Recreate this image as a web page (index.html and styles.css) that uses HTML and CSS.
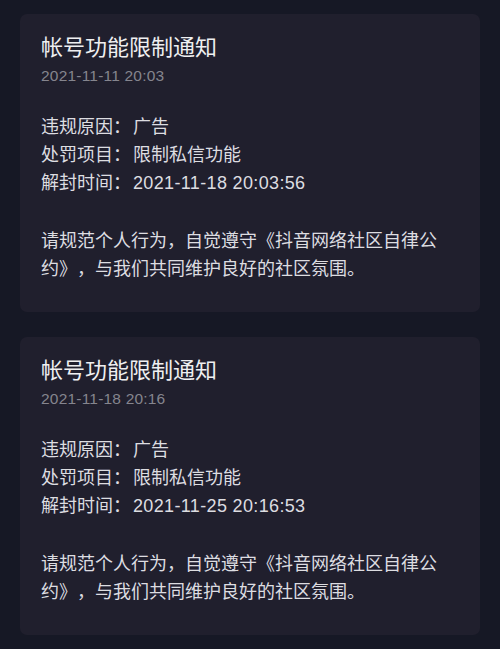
FILE: index.html
```html
<!DOCTYPE html>
<html lang="zh-CN">
<head>
<meta charset="utf-8">
<link rel="stylesheet" href="styles.css">
</head>
<body>
<main class="list">
  <section class="card">
    <h2 class="title">帐号功能限制通知</h2>
    <div class="date">2021-11-11 20:03</div>
    <div class="info">
      <p>违规原因：<span class="val">广告</span></p>
      <p>处罚项目：<span class="val">限制私信功能</span></p>
      <p>解封时间：<span class="val num">2021-11-18 20:03:56</span></p>
    </div>
    <p class="note">请规范个人行为，自觉遵守《抖音网络社区自律公约》，与我们共同维护良好的社区氛围。</p>
  </section>
  <section class="card">
    <h2 class="title">帐号功能限制通知</h2>
    <div class="date">2021-11-18 20:16</div>
    <div class="info">
      <p>违规原因：<span class="val">广告</span></p>
      <p>处罚项目：<span class="val">限制私信功能</span></p>
      <p>解封时间：<span class="val num">2021-11-25 20:16:53</span></p>
    </div>
    <p class="note">请规范个人行为，自觉遵守《抖音网络社区自律公约》，与我们共同维护良好的社区氛围。</p>
  </section>
</main>
</body>
</html>
```
FILE: styles.css
```css
html, body {
  margin: 0;
  padding: 0;
  background: #161825;
}
body {
  font-family: "Liberation Sans", "Noto Sans CJK SC", sans-serif;
  color: #dddde1;
  width: 500px;
  height: 649px;
  overflow: hidden;
  text-spacing-trim: space-all;
}
.list {
  display: flex;
  flex-direction: column;
  gap: 25px;
  padding: 14px 20px 0;
}
.card {
  background: #201f2d;
  border-radius: 7px;
  padding: 20px 21px 29px;
}
.title {
  margin: 0;
  font-size: 22px;
  font-weight: 400;
  line-height: 28px;
  color: #efeff1;
}
.date {
  font-size: 15.5px;
  line-height: 28px;
  color: #85858e;
  letter-spacing: 0.2px;
}
.info {
  margin-top: 23px;
}
.info p, .note {
  margin: 0;
  font-size: 18px;
  line-height: 28px;
}
.val {
  margin-left: 2px;
}
.num {
  letter-spacing: 0.35px;
}
.note {
  margin-top: 30px;
}
```
